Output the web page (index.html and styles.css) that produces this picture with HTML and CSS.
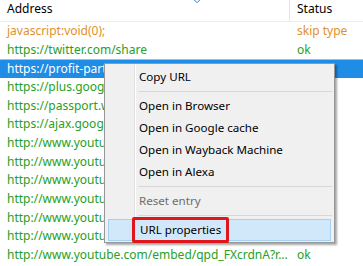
FILE: index.html
```html
<!DOCTYPE html>
<html>
<head>
<meta charset="utf-8">
<link rel="stylesheet" href="styles.css">
</head>
<body>
<div class="list">
  <div class="header">
    <div class="col-addr hcell">Address<svg class="sort" width="8" height="4" viewBox="0 0 8 4"><path d="M0 0 L4 3.5 L8 0" fill="none" stroke="#3a8ee6" stroke-width="1"/></svg></div>
    <div class="col-status hcell">Status</div>
  </div>
  <div class="row skip"><div class="col-addr">javascript:void(0);</div><div class="col-status">skip type</div></div>
  <div class="row ok"><div class="col-addr">https://twitter.com/share</div><div class="col-status">ok</div></div>
  <div class="row ok selected"><div class="col-addr">https://profit-partner.ru/ref/213</div><div class="col-status">ok</div></div>
  <div class="row ok"><div class="col-addr">https://plus.google.com/share?url=</div><div class="col-status">ok</div></div>
  <div class="row ok"><div class="col-addr">https://passport.webmoney.ru/</div><div class="col-status">ok</div></div>
  <div class="row ok"><div class="col-addr">https://ajax.googleapis.com/ajax/libs</div><div class="col-status">ok</div></div>
  <div class="row ok"><div class="col-addr">http://www.youtube.com/embed/a1</div><div class="col-status">ok</div></div>
  <div class="row ok"><div class="col-addr">http://www.youtube.com/embed/b2</div><div class="col-status">ok</div></div>
  <div class="row ok"><div class="col-addr">http://www.youtube.com/embed/c3</div><div class="col-status">ok</div></div>
  <div class="row ok"><div class="col-addr">http://www.youtube.com/embed/d4</div><div class="col-status">ok</div></div>
  <div class="row ok"><div class="col-addr">http://www.youtube.com/embed/e5</div><div class="col-status">ok</div></div>
  <div class="row ok"><div class="col-addr">http://www.youtube.com/embed/f6</div><div class="col-status">ok</div></div>
  <div class="row ok"><div class="col-addr">http://www.youtube.com/embed/qpd_FXcrdnA?r...</div><div class="col-status">ok</div></div>
</div>

<div class="menu">
  <div class="item">Copy URL</div>
  <div class="sep"></div>
  <div class="item">Open in Browser</div>
  <div class="item">Open in Google cache</div>
  <div class="item">Open in Wayback Machine</div>
  <div class="item">Open in Alexa</div>
  <div class="sep"></div>
  <div class="item disabled">Reset entry</div>
  <div class="sep"></div>
  <div class="item hover"><span class="mark">URL properties</span></div>
</div>
</body>
</html>
```

FILE: styles.css
```css
html, body {
  margin: 0;
  padding: 0;
  background: #ffffff;
  width: 363px;
  height: 266px;
  overflow: hidden;
}
body {
  font-family: "Noto Sans", "Open Sans", sans-serif;
  font-size: 12px;
  position: relative;
}
.list {
  display: flex;
  flex-direction: column;
}
.header {
  display: flex;
  height: 21px;
  border-bottom: 1px solid #e8eef4;
  color: #000;
}
.hcell {
  line-height: 18px;
  position: relative;
}
.header .col-addr {
  border-right: 1px solid #e5e5e5;
  box-sizing: border-box;
}
.sort {
  position: absolute;
  left: 193px;
  top: -1px;
}
.col-addr {
  width: 290px;
  flex: none;
  padding-left: 7px;
  padding-right: 8px;
  box-sizing: border-box;
  white-space: nowrap;
  overflow: hidden;
}
.col-status {
  padding-left: 7px;
  white-space: nowrap;
}
.row {
  display: flex;
  height: 18.67px;
  line-height: 18.67px;
}
.row.skip { color: #e3902a; }
.row.ok { color: #26a026; }
.row.selected {
  background: #1f8ce6;
  color: #ffffff;
  border-top: 1px solid #8cc6f2;
  box-sizing: border-box;
}

.menu {
  position: absolute;
  left: 104px;
  top: 63px;
  width: 231px;
  height: 180px;
  box-sizing: border-box;
  background: #f0f0f0;
  border: 1px solid #979797;
  box-shadow: 2px 2px 2px rgba(0,0,0,0.35);
  padding: 2px 2px;
  display: flex;
  flex-direction: column;
  background-image: linear-gradient(to right, transparent 29px, #e2e2e2 29px, #e2e2e2 30px, #ffffff 30px, #ffffff 31px, transparent 31px);
  color: #000;
  font-size: 11.6px;
}
.item {
  height: 22px;
  line-height: 22px;
  padding-left: 32px;
  flex: none;
  box-sizing: border-box;
}
.item.disabled { color: #6d6d6d; }
.item.hover {
  background: #d1e8fb;
  border: 1px solid #a6d0f0;
  line-height: 20px;
  padding-left: 31px;
  margin: 0 1px;
  position: relative;
}
.mark {
  position: absolute;
  left: 23px;
  top: -3px;
  width: 97px;
  height: 26px;
  box-sizing: border-box;
  border: 3px solid #e0161d;
  border-radius: 2px;
  padding-left: 5px;
  line-height: 20px;
}
.sep {
  height: 7px;
  flex: none;
  margin-left: 31px;
  background: linear-gradient(#d7d7d7, #d7d7d7) no-repeat 0 3px / 100% 1px;
}
```
